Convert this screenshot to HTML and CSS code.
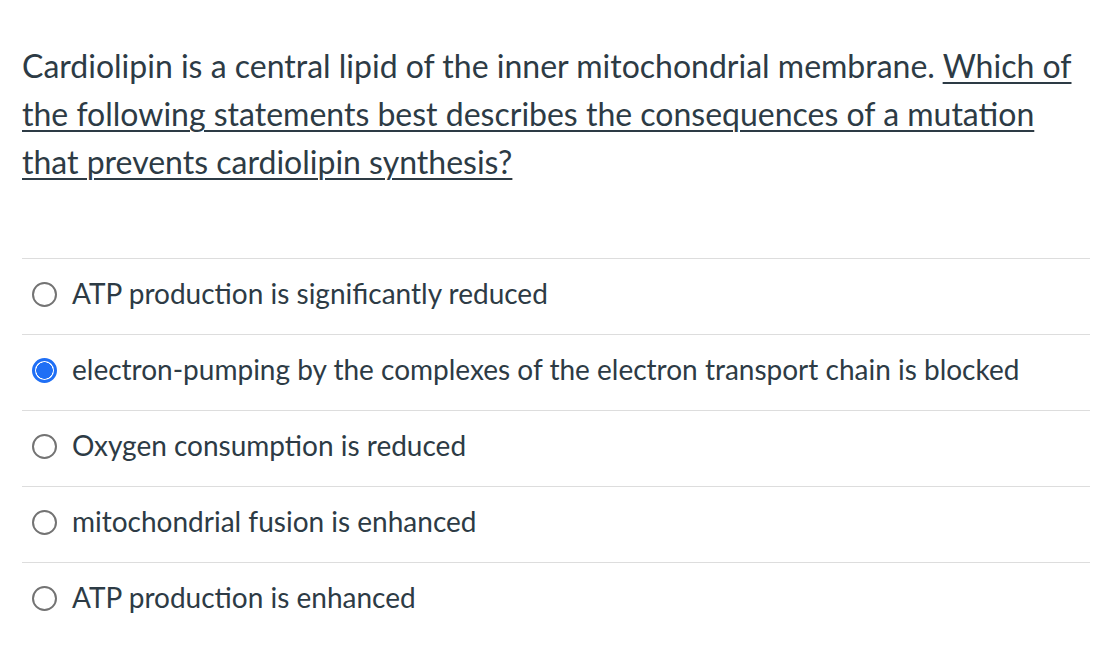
FILE: index.html
```html
<!DOCTYPE html>
<html>
<head>
<meta charset="utf-8">
<link rel="stylesheet" href="styles.css">
</head>
<body>
<div class="quiz">
  <p class="question">Cardiolipin is a central lipid of the inner mitochondrial membrane. <u>Which of the following statements best describes the consequences of a mutation that prevents cardiolipin synthesis?</u></p>
  <div class="answers">
    <div class="answer"><span class="radio"></span><span class="label">ATP production is significantly reduced</span></div>
    <div class="answer"><span class="radio checked"></span><span class="label">electron-pumping by the complexes of the electron transport chain is blocked</span></div>
    <div class="answer"><span class="radio"></span><span class="label">Oxygen consumption is reduced</span></div>
    <div class="answer"><span class="radio"></span><span class="label">mitochondrial fusion is enhanced</span></div>
    <div class="answer"><span class="radio"></span><span class="label">ATP production is enhanced</span></div>
  </div>
</div>
</body>
</html>
```
FILE: styles.css
```css
html, body {
  margin: 0;
  padding: 0;
  background: #ffffff;
}
body {
  font-family: Lato, "Open Sans", sans-serif;
  color: #2d3b45;
  font-feature-settings: "liga" 1;
}
.quiz {
  padding: 42px 14px 0 22px;
  width: 1068px;
}
.question {
  margin: 0;
  font-size: 32px;
  line-height: 48px;
  width: 1060px;
}
.question u {
  text-decoration-thickness: 2px;
  text-underline-offset: 4px;
}
.answers {
  margin-top: 72px;
}
.answer {
  box-sizing: border-box;
  display: flex;
  align-items: center;
  height: 76px;
  padding-bottom: 7px;
  border-top: 1px solid #dddddd;
  font-size: 28px;
}
.radio {
  box-sizing: border-box;
  width: 25px;
  height: 25px;
  border: 2px solid #737373;
  border-radius: 50%;
  margin-left: 10px;
  margin-right: 15px;
  flex: none;
  background: #fff;
  position: relative;
  top: 1px;
}
.radio.checked {
  border: 3px solid #1f6ff5;
  background: radial-gradient(circle, #1f6ff5 0, #1f6ff5 8px, #fff 8.5px);
}
.label {
  line-height: 34px;
}
```
